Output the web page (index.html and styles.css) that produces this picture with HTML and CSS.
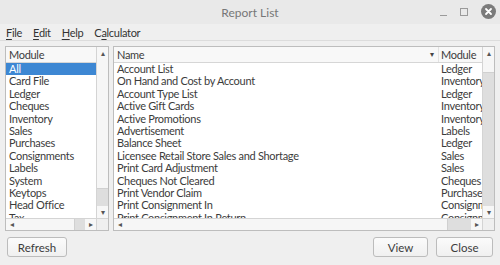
FILE: index.html
```html
<!DOCTYPE html>
<html lang="en">
<head>
<meta charset="UTF-8" />
<title>Report List</title>
<link rel="stylesheet" href="styles.css">
</head>
<body>

<div class="window">
  <!-- Title bar -->
  <div class="titlebar">
    <span class="title">Report List</span>
    <div class="controls">
      <span class="ctl-min"></span>
      <span class="ctl-max"></span>
      <span class="ctl-close">
        <svg width="15" height="15" viewBox="0 0 15 15"><circle cx="7.5" cy="7.5" r="7.5" fill="#7b7b7b"/><path d="M5 5 L10 10 M10 5 L5 10" stroke="#fff" stroke-width="1.8" stroke-linecap="round"/></svg>
      </span>
    </div>
  </div>

  <!-- Menu -->
  <div class="menubar">
    <span><u>F</u>ile</span>
    <span><u>E</u>dit</span>
    <span><u>H</u>elp</span>
    <span>C<u>a</u>lculator</span>
  </div>

  <div class="panes">
    <!-- Module list -->
    <div class="listbox modules">
      <div class="lb-main">
        <div class="lb-view">
          <div class="lb-head"><span class="hcell">Module</span></div>
          <div class="lb-rows">
            <div class="row selected">All</div>
            <div class="row">Card File</div>
            <div class="row">Ledger</div>
            <div class="row">Cheques</div>
            <div class="row">Inventory</div>
            <div class="row">Sales</div>
            <div class="row">Purchases</div>
            <div class="row">Consignments</div>
            <div class="row">Labels</div>
            <div class="row">System</div>
            <div class="row">Keytops</div>
            <div class="row">Head Office</div>
            <div class="row">Tax</div>
          </div>
        </div>
        <div class="vscroll">
          <span class="arrow">&#9652;</span>
          <div class="vtrack"><div class="thumb" style="height:88%"></div></div>
          <span class="arrow">&#9662;</span>
        </div>
      </div>
      <div class="hscroll-row">
        <div class="hscroll">
          <span class="arrow">&#9666;</span>
          <div class="htrack"><div class="thumb" style="width:84%"></div></div>
          <span class="arrow">&#9656;</span>
        </div>
        <div class="corner"></div>
      </div>
    </div>

    <!-- Report list -->
    <div class="listbox reports">
      <div class="lb-main">
        <div class="lb-view">
          <div class="lb-head">
            <span class="hcell name-col">Name<span class="sort">&#9662;</span></span>
            <span class="hcell mod-col">Module</span>
          </div>
          <div class="lb-rows" id="report-rows"></div>
        </div>
        <div class="vscroll">
          <span class="arrow">&#9652;</span>
          <div class="vtrack"><div class="thumb" style="height:9%"></div></div>
          <span class="arrow">&#9662;</span>
        </div>
      </div>
      <div class="hscroll-row">
        <div class="hscroll">
          <span class="arrow">&#9666;</span>
          <div class="htrack"><div class="thumb" style="width:93%"></div></div>
          <span class="arrow">&#9656;</span>
        </div>
        <div class="corner"></div>
      </div>
    </div>
  </div>

  <div class="buttons">
    <button class="btn refresh">Refresh</button>
    <span class="spacer"></span>
    <button class="btn view">View</button>
    <button class="btn close">Close</button>
  </div>
</div>

<script>
  const reports = [
    ['Account List', 'Ledger'],
    ['On Hand and Cost by Account', 'Inventory'],
    ['Account Type List', 'Ledger'],
    ['Active Gift Cards', 'Inventory'],
    ['Active Promotions', 'Inventory'],
    ['Advertisement', 'Labels'],
    ['Balance Sheet', 'Ledger'],
    ['Licensee Retail Store Sales and Shortage', 'Sales'],
    ['Print Card Adjustment', 'Sales'],
    ['Cheques Not Cleared', 'Cheques'],
    ['Print Vendor Claim', 'Purchases'],
    ['Print Consignment In', 'Consignments'],
    ['Print Consignment In Return', 'Consignments']
  ];

  const rows = document.getElementById('report-rows');
  reports.forEach(r => {
    const div = document.createElement('div');
    div.className = 'row';
    div.innerHTML = `<span class="name-col">${r[0]}</span><span class="mod-col">${r[1]}</span>`;
    rows.appendChild(div);
  });
</script>

</body>
</html>
```

FILE: styles.css
```css
body {
  margin: 0;
  font-family: Lato, sans-serif;
  font-size: 11px;
  letter-spacing: -0.3px;
  color: #3c3c3c;
  background: #efefef;
}
.window {
  width: 500px;
  height: 265px;
  display: flex;
  flex-direction: column;
  overflow: hidden;
}
.titlebar {
  height: 24px;
  background: #e9e9e9;
  position: relative;
  display: flex;
  align-items: center;
  justify-content: center;
  flex-shrink: 0;
}
.title {
  color: #777;
  font-size: 12px;
  letter-spacing: 0;
}
.controls {
  position: absolute;
  right: 4px;
  top: 4px;
  display: flex;
  align-items: center;
  gap: 13px;
}
.ctl-min {
  width: 7px;
  height: 8px;
  border-bottom: 1px solid #9a9a9a;
}
.ctl-max {
  width: 6px;
  height: 6px;
  border: 1px solid #9a9a9a;
}
.ctl-close svg { display: block; }

.menubar {
  height: 16px;
  padding: 0 6px;
  display: flex;
  align-items: center;
  gap: 11px;
  border-bottom: 1px solid #dcdcdc;
  background: #efefef;
  color: #333;
  font-size: 11px;
  flex-shrink: 0;
}
.menubar u { text-decoration-thickness: 1px; text-underline-offset: 2px; }

.panes {
  display: flex;
  gap: 4px;
  padding: 5px 5px 0 5px;
  height: 185px;
  flex-shrink: 0;
}
.listbox {
  border: 1px solid #bdbdbd;
  background: #fff;
  display: flex;
  flex-direction: column;
  box-sizing: border-box;
  height: 185px;
}
.modules { width: 104px; flex-shrink: 0; }
.reports { flex: 1; min-width: 0; }
.lb-main {
  flex: 1;
  display: flex;
  min-height: 0;
}
.lb-view {
  flex: 1;
  min-width: 0;
  overflow: hidden;
  display: flex;
  flex-direction: column;
}
.lb-head {
  height: 15px;
  display: flex;
  background: #f8f8f8;
  border-bottom: 1px solid #d6d6d6;
  flex-shrink: 0;
}
.hcell {
  padding-left: 3px;
  line-height: 15px;
  white-space: nowrap;
}
.row {
  height: 12.42px;
  line-height: 12.42px;
  padding-left: 3px;
  white-space: nowrap;
  display: flex;
}
.row.selected {
  background: #3d87d3;
  color: #fff;
}
.reports .row { padding-left: 0; }
.name-col {
  width: 325px;
  padding-left: 3px;
  flex-shrink: 0;
  box-sizing: border-box;
}
.mod-col {
  padding-left: 2px;
  white-space: nowrap;
  overflow: hidden;
  width: 46px;
  flex-shrink: 0;
}
.lb-head .name-col {
  display: flex;
  justify-content: space-between;
  padding-right: 4px;
  border-right: 1px solid #e2e2e2;
}
.sort { font-size: 8px; color: #444; }

.vscroll {
  width: 11px;
  border-left: 1px solid #d4d4d4;
  display: flex;
  flex-direction: column;
  background: #f7f7f7;
  flex-shrink: 0;
}
.vscroll .arrow {
  height: 12px;
  line-height: 12px;
  text-align: center;
  font-size: 8px;
  color: #555;
  flex-shrink: 0;
}
.vtrack {
  flex: 1;
  background: #dedede;
  display: flex;
  flex-direction: column;
}
.vtrack .thumb {
  background: #f6f6f6;
  border-bottom: 1px solid #d0d0d0;
}
.hscroll-row {
  display: flex;
  height: 11px;
  border-top: 1px solid #d4d4d4;
  flex-shrink: 0;
}
.hscroll {
  flex: 1;
  min-width: 0;
  display: flex;
  background: #f7f7f7;
}
.hscroll .arrow {
  width: 11px;
  line-height: 11px;
  text-align: center;
  font-size: 8px;
  color: #555;
  flex-shrink: 0;
}
.htrack {
  flex: 1;
  display: flex;
  background: #dedede;
}
.htrack .thumb {
  background: #f6f6f6;
  border-right: 1px solid #d0d0d0;
}
.corner {
  width: 11px;
  border-left: 1px solid #d4d4d4;
  background: #efefef;
}

.buttons {
  display: flex;
  gap: 8px;
  padding: 6px 7px 0 7px;
}
.spacer { flex: 1; }
.btn {
  font-family: Lato, sans-serif;
  font-size: 11.5px;
  letter-spacing: 0;
  color: #3c3c3c;
  height: 20px;
  padding: 0;
  background: linear-gradient(#fbfbfb, #f0f0f0);
  border: 1px solid #bcbcbc;
  border-radius: 3px;
}
.refresh { width: 60px; }
.view { width: 55px; }
.close { width: 57px; }
```
